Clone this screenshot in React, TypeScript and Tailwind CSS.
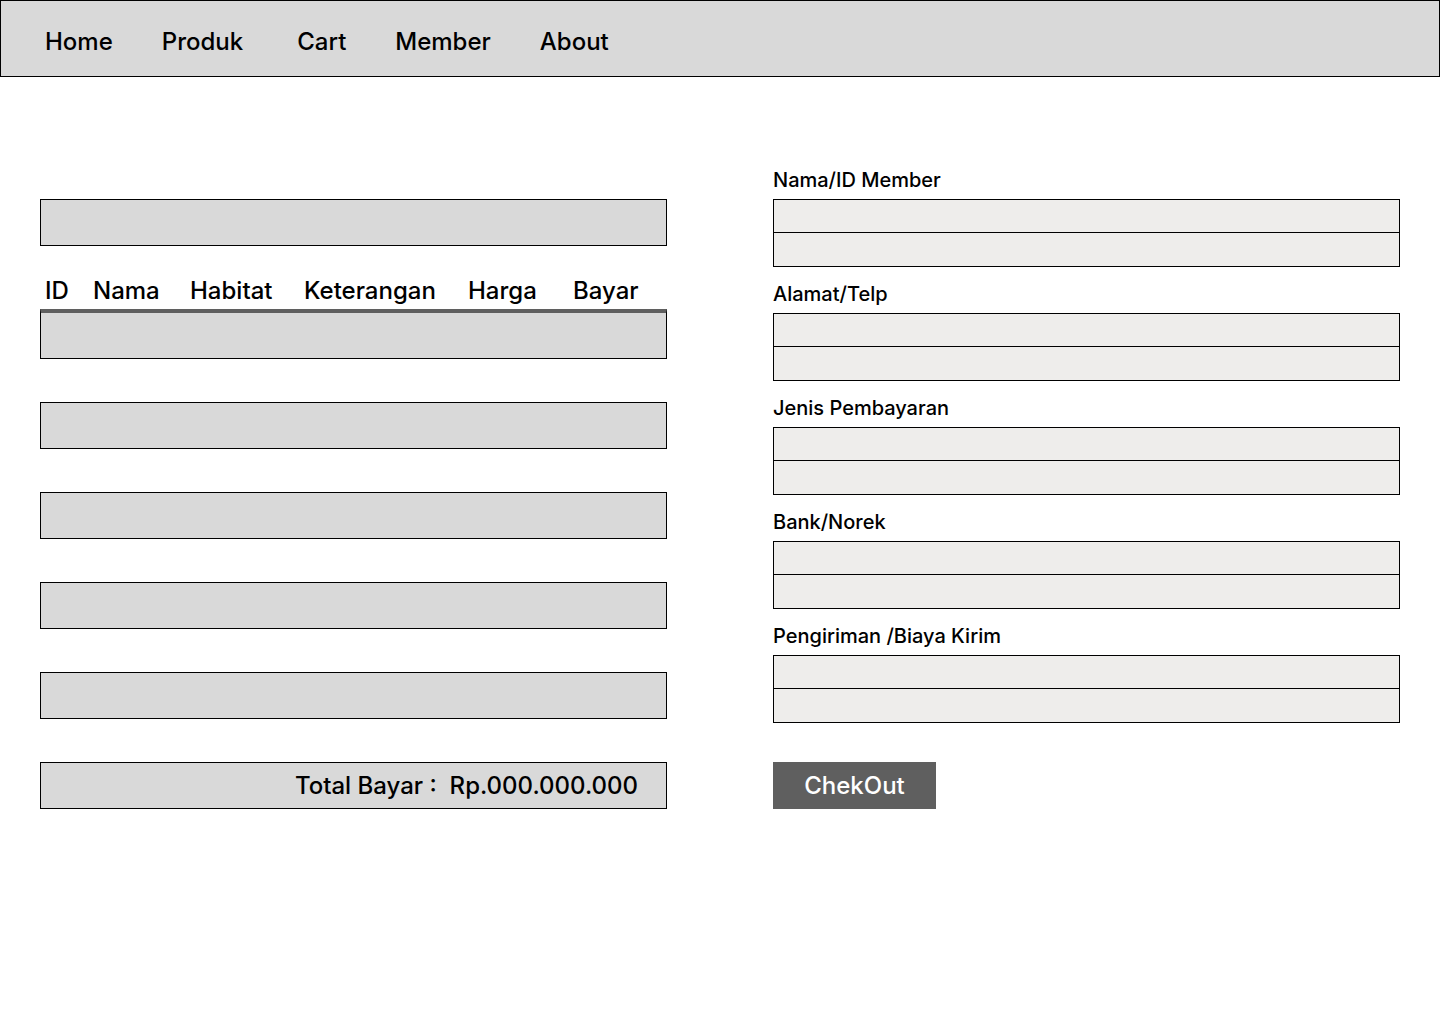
const NAV = [
	{ label: "Home", cls: "" },
	{ label: "Produk", cls: "" },
	{ label: "Cart", cls: "ml-[5px]" },
	{ label: "Member", cls: "" },
	{ label: "About", cls: "" },
]

const COLUMNS = [
	{ label: "ID", cls: "w-[48px]" },
	{ label: "Nama", cls: "w-[97px]" },
	{ label: "Habitat", cls: "w-[114px]" },
	{ label: "Keterangan", cls: "w-[164px]" },
	{ label: "Harga", cls: "w-[105px]" },
	{ label: "Bayar", cls: "" },
]

const FIELDS = ["Nama/ID Member", "Alamat/Telp", "Jenis Pembayaran", "Bank/Norek", "Pengiriman /Biaya Kirim"]

export default function App() {
	return (
		<div className="min-h-screen bg-white font-['Inter',sans-serif] text-black">
			{/* Top Navigation */}
			<nav className="flex h-[77px] items-center gap-[49px] border border-black bg-[#d9d9d9] pl-[44px] pt-[6px]">
				{NAV.map((item) => (
					<a key={item.label} className={`text-[24px] font-medium leading-[29px] ${item.cls}`}>
						{item.label}
					</a>
				))}
			</nav>

			<main className="flex gap-[106px] pl-[40px]">
				{/* Cart Table */}
				<section className="flex w-[627px] flex-col pt-[122px]">
					<div className="h-[47px] border border-black bg-[#d9d9d9]" />

					<div className="flex h-[63px] items-end pb-[4px] pl-[5px]">
						{COLUMNS.map((col) => (
							<span key={col.label} className={`text-[24px] font-medium leading-[29px] ${col.cls}`}>
								{col.label}
							</span>
						))}
					</div>

					<div className="h-[50px] border border-t-[4px] border-black border-t-[#5f5f5f] bg-[#d9d9d9]" />

					<div className="mt-[43px] flex flex-col gap-[43px]">
						{[0, 1, 2, 3].map((i) => (
							<div key={i} className="h-[47px] border border-black bg-[#d9d9d9]" />
						))}
						<div className="flex h-[47px] items-center justify-end border border-black bg-[#d9d9d9] pr-[28px]">
							<span className="text-[24px] font-medium leading-[29px]">Total Bayar :&nbsp; Rp.000.000.000</span>
						</div>
					</div>
				</section>

				{/* Checkout Form */}
				<section className="flex w-[627px] flex-col pt-[91px]">
					{FIELDS.map((label) => (
						<div key={label} className="mb-[15px] flex flex-col">
							<label className="mb-[7px] text-[20px] font-medium leading-[24px]">{label}</label>
							<div className="flex flex-col border border-black bg-[#eeedeb]">
								<div className="h-[32px]" />
								<div className="h-[34px] border-t border-black" />
							</div>
						</div>
					))}

					<button className="mt-[24px] flex h-[47px] w-[163px] items-center justify-center bg-[#5f5f5f] text-[24px] font-medium leading-[29px] text-white">
						ChekOut
					</button>
				</section>
			</main>
		</div>
	)
}
